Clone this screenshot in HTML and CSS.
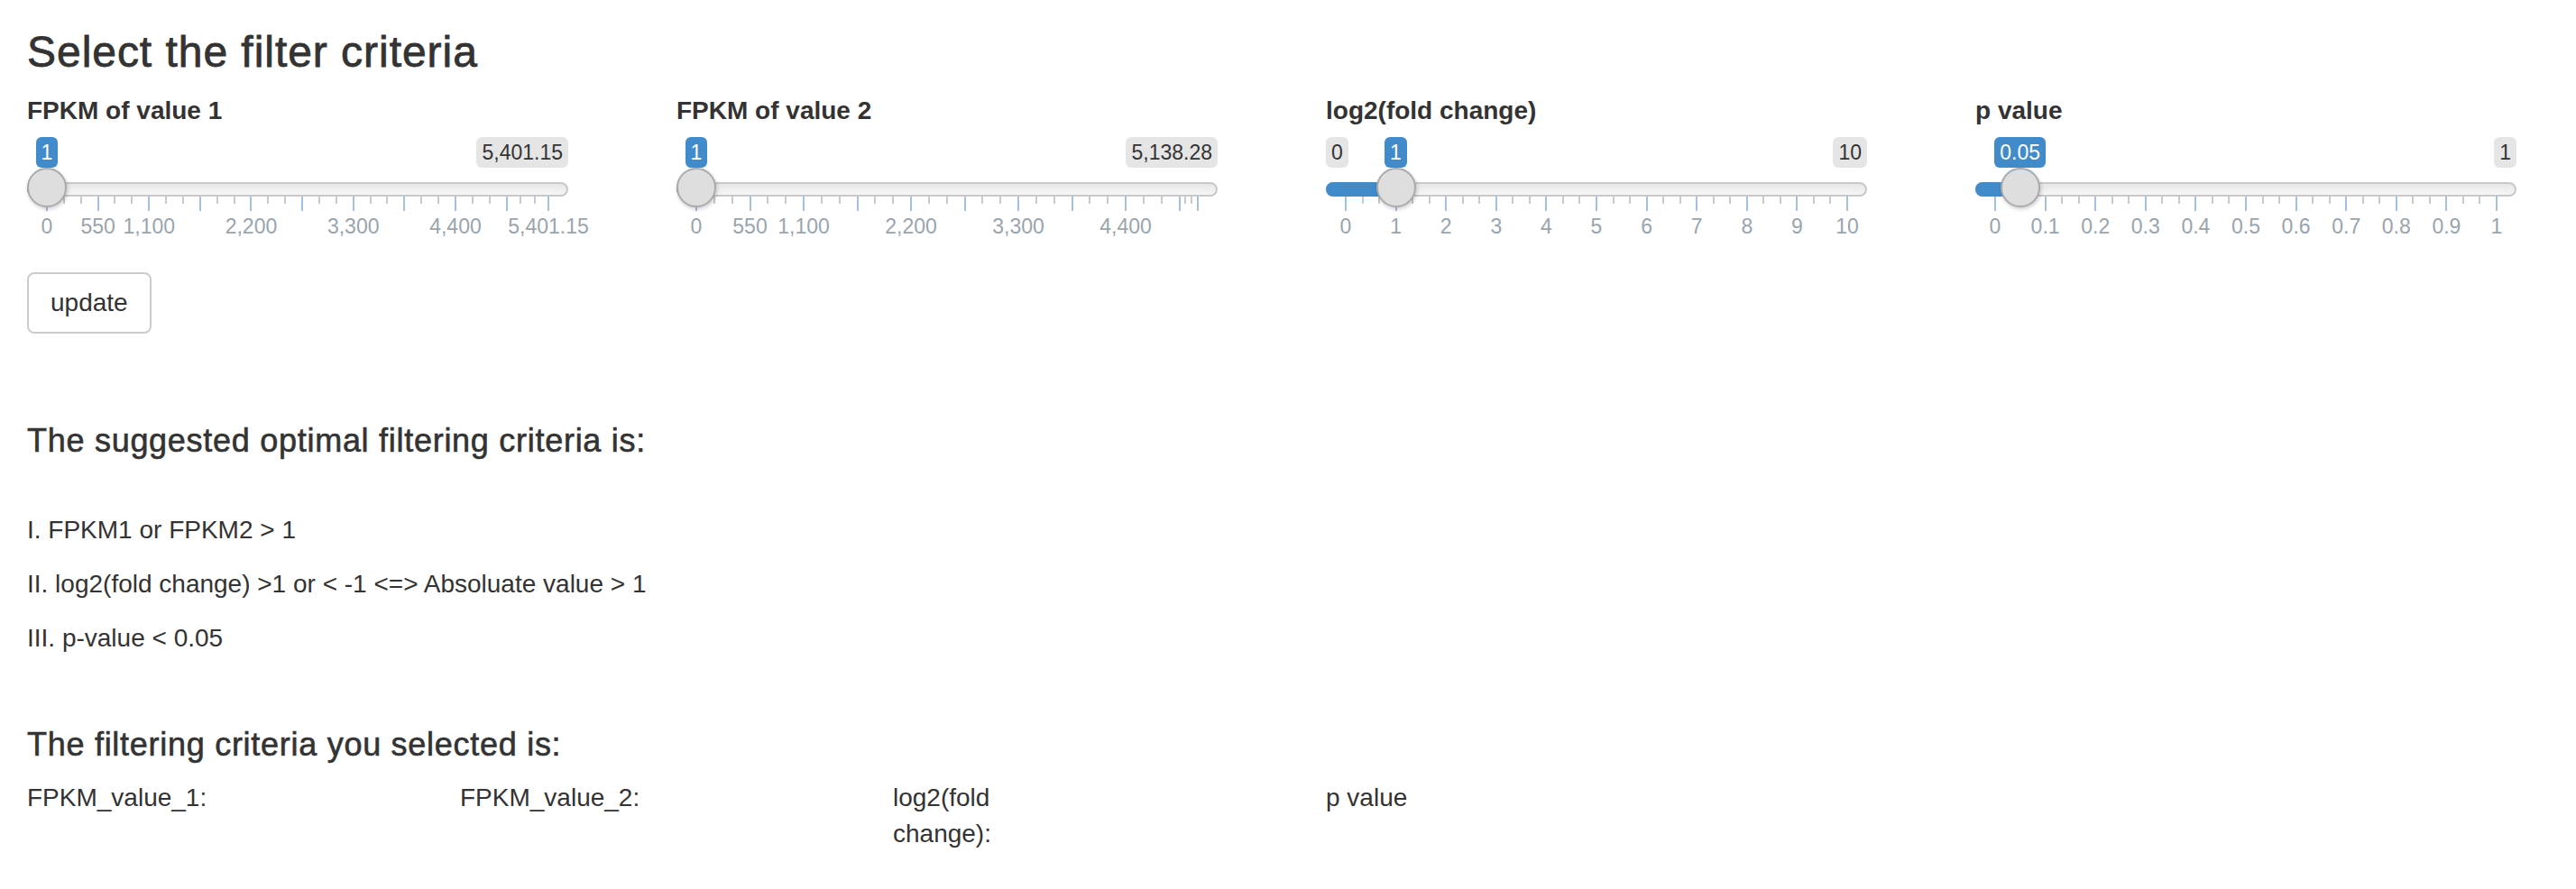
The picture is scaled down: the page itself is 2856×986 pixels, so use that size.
FILE: index.html
```html
<!DOCTYPE html>
<html lang="en">
<head>
  <meta charset="UTF-8">
  <meta name="viewport" content="width=device-width, initial-scale=1.0">
  <title>Select the filter criteria</title>
  <link rel="stylesheet" href="styles.css">
</head>
<body>
  <div class="page">
    <h3 class="page-title">Select the filter criteria</h3>

    <div class="filters">
      <div class="form-group">
        <label class="control-label">FPKM of value 1</label>
        <div class="irs" data-min="0" data-max="5401.15" data-value="1" data-step="550"
             data-labels="0,550,1100,2200,3300,4400,5401.15"></div>
      </div>
      <div class="form-group">
        <label class="control-label">FPKM of value 2</label>
        <div class="irs" data-min="0" data-max="5138.28" data-value="1" data-step="550"
             data-labels="0,550,1100,2200,3300,4400"></div>
      </div>
      <div class="form-group">
        <label class="control-label">log2(fold change)</label>
        <div class="irs" data-min="0" data-max="10" data-value="1" data-step="1"
             data-labels="0,1,2,3,4,5,6,7,8,9,10"></div>
      </div>
      <div class="form-group">
        <label class="control-label">p value</label>
        <div class="irs" data-min="0" data-max="1" data-value="0.05" data-step="0.1"
             data-labels="0,0.1,0.2,0.3,0.4,0.5,0.6,0.7,0.8,0.9,1"></div>
      </div>
    </div>

    <div class="actions">
      <button class="btn">update</button>
    </div>

    <h4 class="section-title suggested">The suggested optimal filtering criteria is:</h4>
    <p>I. FPKM1 or FPKM2 &gt; 1</p>
    <p>II. log2(fold change) &gt;1 or &lt; -1 &lt;=&gt; Absoluate value &gt; 1</p>
    <p>III. p-value &lt; 0.05</p>

    <h4 class="section-title selected-title">The filtering criteria you selected is:</h4>
    <div class="selected">
      <div class="selected-label">FPKM_value_1:</div><div class="selected-value"></div>
      <div class="selected-label">FPKM_value_2:</div><div class="selected-value"></div>
      <div class="selected-label">log2(fold change):</div><div class="selected-value"></div>
      <div class="selected-label">p value</div><div class="selected-value"></div>
    </div>
  </div>

  <script src="script.js"></script>
</body>
</html>
```

FILE: styles.css
```css
body {margin: 0; font-family: "Liberation Sans", Arial, sans-serif; font-size: 28px; line-height: 40px; color: #333; background: #fff;}
.page {padding: 0 30px;}
.page-title {margin: 31px 0 19px; font-size: 48px; line-height: 53px; font-weight: normal; letter-spacing: 0.02em; -webkit-text-stroke: 0.8px #333;}

.filters {display: grid; grid-template-columns: repeat(4, 600px); column-gap: 120px;}
.form-group {margin-bottom: 30px;}
.control-label {display: block; margin-bottom: 9px; font-weight: bold;}

/* range slider */
.irs {position: relative; height: 120px;}
.irs-line {position: absolute; top: 50px; left: 0; right: 0; height: 16px; box-sizing: border-box; border: 2px solid #c8c8c8; border-radius: 16px; background: linear-gradient(to bottom, #dedede -50%, #fff 150%); background-color: #ededed;}
.irs-bar {position: absolute; top: 50px; left: 0; height: 16px; background: #428bca; border-radius: 16px 0 0 16px;}
.irs-handle {position: absolute; top: 34px; width: 44px; height: 44px; box-sizing: border-box; border: 2px solid #ababab; border-radius: 50%; background: #dedede; box-shadow: 1px 2px 4px rgba(0,0,0,0.2);}
.irs-min, .irs-max, .irs-single {position: absolute; top: 0; padding: 2px 6px; font-size: 23px; line-height: 30px; border-radius: 6px; white-space: nowrap;}
.irs-min {left: 0; background: rgba(0,0,0,0.1); color: #333;}
.irs-max {right: 0; background: rgba(0,0,0,0.1); color: #333;}
.irs-single {background: #428bca; color: #fff;}
.irs-grid {position: absolute; top: 66px; left: 0; right: 0; height: 54px;}
.irs-grid-pol {position: absolute; top: 0; width: 2px; height: 16px; margin-left: -1px; background: #a4c1e3;}
.irs-grid-pol.small {height: 8px; background: #c9c9c9;}
.irs-grid-text {position: absolute; top: 22px; font-size: 23px; line-height: 22px; color: #99a4ac; white-space: nowrap; transform: translateX(-50%);}

.btn {font-family: inherit; font-size: 28px; line-height: 40px; padding: 12px 24px; color: #333; background: #fff; border: 2px solid #ccc; border-radius: 8px; cursor: pointer;}
.btn:hover {background: #e6e6e6; border-color: #adadad;}

.section-title {font-size: 36px; line-height: 40px; font-weight: normal; letter-spacing: 0.02em; -webkit-text-stroke: 0.6px #333; margin: 0;}
.suggested {margin-top: 99px; margin-bottom: 59px;}
.selected-title {margin-top: 78px; margin-bottom: 19px;}
p {margin: 0 0 20px;}

.selected {display: grid; grid-template-columns: repeat(4, 180px 300px);}
```

FILE: script.js
```js
// Builds the range sliders from their data- attributes.
const HANDLE = 44;

function formatNumber(text) {
  const parts = text.split('.');
  parts[0] = parts[0].replace(/\B(?=(\d{3})+(?!\d))/g, ',');
  return parts.join('.');
}

function addPart(parent, className, text) {
  const part = document.createElement('span');
  part.className = className;
  if (text !== undefined) part.textContent = text;
  parent.appendChild(part);
  return part;
}

document.querySelectorAll('.irs').forEach(function (slider) {
  const min = parseFloat(slider.dataset.min);
  const max = parseFloat(slider.dataset.max);
  const step = parseFloat(slider.dataset.step);
  const value = parseFloat(slider.dataset.value);
  const full = slider.offsetWidth;
  const pos = function (v) { return HANDLE / 2 + (v - min) / (max - min) * (full - HANDLE); };

  // grid: big ticks every step, two small ones in between
  const grid = addPart(slider, 'irs-grid');
  const bigs = [];
  for (let i = 0; min + i * step < max - step / 1000; i++) bigs.push(min + i * step);
  bigs.push(max);
  bigs.forEach(function (v, i) {
    addPart(grid, 'irs-grid-pol').style.left = pos(v) + 'px';
    if (i < bigs.length - 1) {
      const a = pos(v), b = pos(bigs[i + 1]);
      for (let k = 1; k <= 2; k++) {
        addPart(grid, 'irs-grid-pol small').style.left = (a + (b - a) * k / 3) + 'px';
      }
    }
  });
  slider.dataset.labels.split(',').forEach(function (text) {
    addPart(grid, 'irs-grid-text', formatNumber(text)).style.left = pos(parseFloat(text)) + 'px';
  });

  addPart(slider, 'irs-line');
  addPart(slider, 'irs-bar').style.width = pos(value) + 'px';
  addPart(slider, 'irs-handle').style.left = (pos(value) - HANDLE / 2) + 'px';

  const minLabel = addPart(slider, 'irs-min', formatNumber(slider.dataset.min));
  const maxLabel = addPart(slider, 'irs-max', formatNumber(slider.dataset.max));
  const single = addPart(slider, 'irs-single', formatNumber(slider.dataset.value));

  let left = pos(value) - single.offsetWidth / 2;
  left = Math.max(0, Math.min(left, full - single.offsetWidth));
  single.style.left = left + 'px';

  // hide min / max when the value label runs into them
  if (left < minLabel.offsetWidth) minLabel.style.visibility = 'hidden';
  if (left + single.offsetWidth > full - maxLabel.offsetWidth) maxLabel.style.visibility = 'hidden';
});
```
